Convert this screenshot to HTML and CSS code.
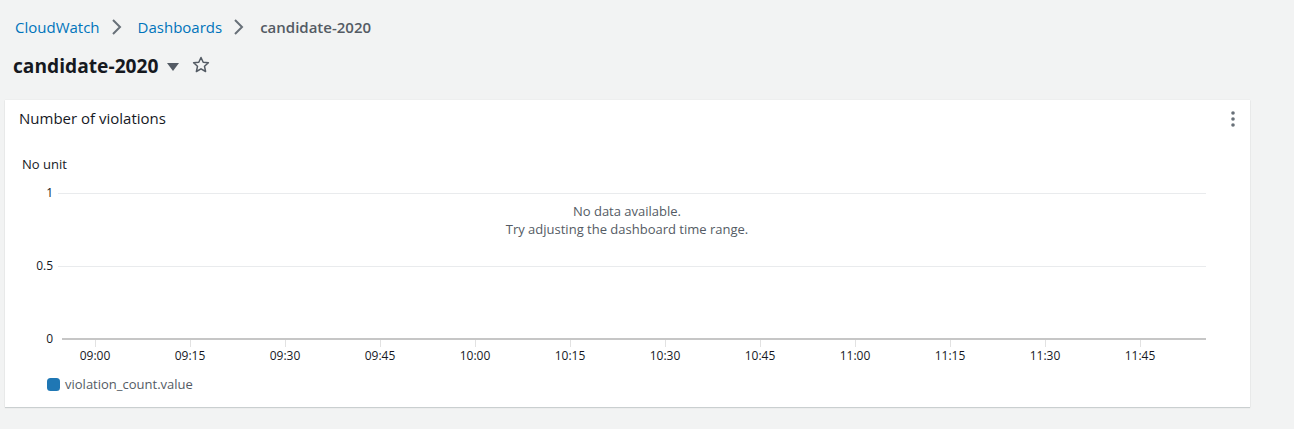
FILE: index.html
```html
<!DOCTYPE html>
<html>
<head>
<meta charset="utf-8">
<link rel="stylesheet" href="styles.css">
</head>
<body>
<nav class="crumbs">
  <a class="crumb-link">CloudWatch</a>
  <svg class="chev" width="12" height="18" viewBox="0 0 12 18"><path d="M2 2 L9 9 L2 16" fill="none" stroke="#687078" stroke-width="2"/></svg>
  <a class="crumb-link">Dashboards</a>
  <svg class="chev" width="12" height="18" viewBox="0 0 12 18"><path d="M2 2 L9 9 L2 16" fill="none" stroke="#687078" stroke-width="2"/></svg>
  <span class="crumb-current">candidate-2020</span>
</nav>
<header class="title-row">
  <h1 class="title">candidate-2020</h1>
  <svg class="caret" width="12" height="9" viewBox="0 0 12 9"><path d="M0 0 H12 L6 8 Z" fill="#545b64"/></svg>
  <svg class="star" width="18" height="18" viewBox="0 0 18 18"><path d="M9 1.5 L11.2 6.3 L16.4 6.8 L12.5 10.3 L13.6 15.5 L9 12.8 L4.4 15.5 L5.5 10.3 L1.6 6.8 L6.8 6.3 Z" fill="none" stroke="#545b64" stroke-width="1.5" stroke-linejoin="round"/></svg>
</header>
<section class="panel">
  <div class="panel-head">
    <h2 class="panel-title">Number of violations</h2>
    <svg class="kebab" width="4" height="16" viewBox="0 0 4 16"><circle cx="2" cy="2" r="1.8" fill="#687078"/><circle cx="2" cy="8" r="1.8" fill="#687078"/><circle cx="2" cy="14" r="1.8" fill="#687078"/></svg>
  </div>
  <svg class="chart" width="1245" height="257" viewBox="0 0 1245 257">
    <text x="17" y="19" class="unit">No unit</text>
    <line x1="53" y1="43.5" x2="1201" y2="43.5" class="grid"/>
    <line x1="53" y1="116.5" x2="1201" y2="116.5" class="grid"/>
    <text x="48" y="47" class="ylab">1</text>
    <text x="48" y="120" class="ylab">0.5</text>
    <text x="48" y="193" class="ylab">0</text>
    <text x="622" y="66" class="nodata">No data available.</text>
    <text x="622" y="84" class="nodata">Try adjusting the dashboard time range.</text>
    <line x1="57" y1="189" x2="1201" y2="189" class="axis"/>
    <g class="ticks">
      <line x1="90.5" y1="190" x2="90.5" y2="197"/>
      <line x1="185.5" y1="190" x2="185.5" y2="197"/>
      <line x1="280.5" y1="190" x2="280.5" y2="197"/>
      <line x1="375.5" y1="190" x2="375.5" y2="197"/>
      <line x1="470.5" y1="190" x2="470.5" y2="197"/>
      <line x1="565.5" y1="190" x2="565.5" y2="197"/>
      <line x1="660.5" y1="190" x2="660.5" y2="197"/>
      <line x1="755.5" y1="190" x2="755.5" y2="197"/>
      <line x1="850.5" y1="190" x2="850.5" y2="197"/>
      <line x1="945.5" y1="190" x2="945.5" y2="197"/>
      <line x1="1040.5" y1="190" x2="1040.5" y2="197"/>
      <line x1="1135.5" y1="190" x2="1135.5" y2="197"/>
    </g>
    <g class="xlab">
      <text x="90" y="210">09:00</text>
      <text x="185" y="210">09:15</text>
      <text x="280" y="210">09:30</text>
      <text x="375" y="210">09:45</text>
      <text x="470" y="210">10:00</text>
      <text x="565" y="210">10:15</text>
      <text x="660" y="210">10:30</text>
      <text x="755" y="210">10:45</text>
      <text x="850" y="210">11:00</text>
      <text x="945" y="210">11:15</text>
      <text x="1040" y="210">11:30</text>
      <text x="1135" y="210">11:45</text>
    </g>
    <rect x="42" y="228" width="13" height="13" rx="3.5" fill="#1f77b4"/>
    <text x="60" y="239" class="legend">violation_count.value</text>
  </svg>
</section>
</body>
</html>
```
FILE: styles.css
```css
* { box-sizing: border-box; }
body {
  margin: 0;
  background: #f2f3f3;
  font-family: "Open Sans", "Noto Sans", Arial, sans-serif;
  color: #16191f;
  width: 1294px;
  height: 429px;
  overflow: hidden;
}
.crumbs {
  display: flex;
  align-items: center;
  height: 20px;
  margin: 17px 0 0 15px;
  font-size: 15px;
  line-height: 20px;
}
.crumb-link { color: #0073bb; }
.chev { margin: 0 15px 0 11px; }
.crumb-current { color: #545b64; font-weight: 600; }
.title-row {
  display: flex;
  align-items: center;
  margin: 18px 0 0 13px;
  height: 22px;
}
.title {
  margin: 0;
  font-size: 19.2px;
  line-height: 22px;
  font-weight: 700;
}
.caret { margin: 2px 0 0 8px; }
.star { margin: -2px 0 0 13px; }
.panel {
  margin: 23px 0 0 5px;
  width: 1245px;
  height: 307px;
  background: #fff;
  box-shadow: 0 1px 1px rgba(0,28,36,0.15), 0 0 1px rgba(0,28,36,0.1);
  display: flex;
  flex-direction: column;
}
.panel-head {
  display: flex;
  align-items: center;
  justify-content: space-between;
  height: 36px;
  padding: 0 15px 0 14px;
}
.panel-title {
  margin: 0;
  font-size: 15px;
  font-weight: 400;
  line-height: 18px;
}
.kebab { margin-top: 1px; }
.chart { display: block; margin-top: 14px; }
.chart text { font-family: "Open Sans", "Noto Sans", Arial, sans-serif; }
.unit { font-size: 13px; fill: #16191f; }
.ylab { font-size: 12px; fill: #16191f; text-anchor: end; }
.grid { stroke: #e9ebed; stroke-width: 1; }
.axis { stroke: #c6c6c6; stroke-width: 2; }
.ticks line { stroke: #e2e2e2; stroke-width: 1; }
.xlab text { font-size: 12px; fill: #16191f; text-anchor: middle; }
.nodata { font-size: 13px; fill: #545b64; text-anchor: middle; }
.legend { font-size: 13px; fill: #545b64; }
```
